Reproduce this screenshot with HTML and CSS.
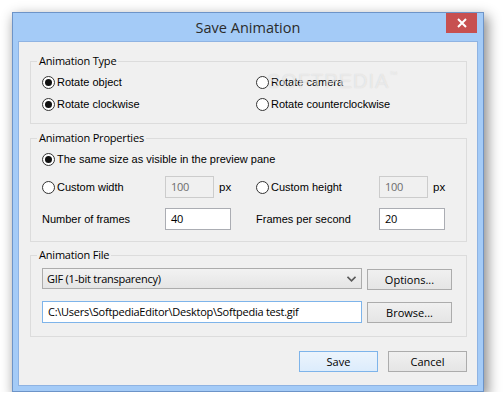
FILE: index.html
```html
<!DOCTYPE html>
<html>
<head>
<meta charset="utf-8">
<link rel="stylesheet" href="styles.css">
</head>
<body>
<div class="window">
  <div class="titlebar">
    <div></div>
    <div class="title">Save Animation</div>
    <div class="close">
      <svg width="10" height="10" viewBox="0 0 10 10"><path d="M1 1 L9 9 M9 1 L1 9" stroke="#fff" stroke-width="2" fill="none"/></svg>
    </div>
  </div>
  <div class="client">
    <div class="watermark">SOFTPEDIA<span class="tm">™</span></div>
    <div class="group g1">
      <div class="legend">Animation Type</div>
      <div class="two">
        <label class="radio"><span class="dot on"></span>Rotate object</label>
        <label class="radio"><span class="dot"></span>Rotate camera</label>
        <label class="radio"><span class="dot on"></span>Rotate clockwise</label>
        <label class="radio"><span class="dot"></span>Rotate counterclockwise</label>
      </div>
    </div>
    <div class="group g2">
      <div class="legend">Animation Properties</div>
      <label class="radio first"><span class="dot on"></span>The same size as visible in the preview pane</label>
      <div class="two rowsize">
        <div class="half">
          <label class="radio"><span class="dot"></span>Custom width</label>
          <div class="input dis short">100</div>
          <span class="px">px</span>
        </div>
        <div class="half">
          <label class="radio"><span class="dot"></span>Custom height</label>
          <div class="input dis short">100</div>
          <span class="px">px</span>
        </div>
      </div>
      <div class="two rowframes">
        <div class="half">
          <span class="lbl">Number of frames</span>
          <div class="input long">40</div>
        </div>
        <div class="half">
          <span class="lbl">Frames per second</span>
          <div class="input long">20</div>
        </div>
      </div>
    </div>
    <div class="group g3">
      <div class="legend">Animation File</div>
      <div class="filerow">
        <div class="select">GIF (1-bit transparency)
          <svg class="chev" width="9" height="6" viewBox="0 0 9 6"><path d="M0.5 0.8 L4.5 4.8 L8.5 0.8" stroke="#5a5a5a" stroke-width="1.6" fill="none"/></svg>
        </div>
        <div class="btn">Options...</div>
      </div>
      <div class="filerow second">
        <div class="input path">C:\Users\SoftpediaEditor\Desktop\Softpedia test.gif</div>
        <div class="btn">Browse...</div>
      </div>
    </div>
    <div class="actions">
      <div class="btn big def">Save</div>
      <div class="btn big">Cancel</div>
    </div>
  </div>
</div>
</body>
</html>
```

FILE: styles.css
```css
html, body {
  margin: 0;
  padding: 0;
  background: #ffffff;
}
body {
  padding: 12px 0 0 12px;
  font-family: "Liberation Sans", Arial, sans-serif;
  font-size: 11px;
  color: #000;
}
.window {
  width: 460px;
  height: 373px;
  border: 1px solid #6d94c8;
  background: #a4cbf7;
  padding: 0 5px 5px 5px;
  box-shadow: 3px 5px 12px 1px rgba(0,0,0,0.45);
  display: flex;
  flex-direction: column;
}
.titlebar {
  height: 28px;
  flex: none;
  display: grid;
  grid-template-columns: 1fr auto 1fr;
  align-items: start;
  margin: 0 -5px;
}
.title {
  font-family: "Open Sans", "Noto Sans", sans-serif;
  font-size: 14.5px;
  color: #2b2b2b;
  line-height: 20px;
  padding-top: 5px;
}
.close {
  justify-self: end;
  margin-right: 6px;
  width: 31px;
  height: 20px;
  background: #c75050;
  display: flex;
  align-items: center;
  justify-content: center;
}
.client {
  flex: 1;
  border: 1px solid #8fb3e2;
  background: #f0f0f0;
  padding: 19px 10px 0 11px;
  position: relative;
  display: flex;
  flex-direction: column;
}
.watermark {
  position: absolute;
  left: 248px;
  top: 28px;
  font-family: "Liberation Sans", sans-serif;
  font-size: 20px;
  letter-spacing: 1px;
  color: rgba(255,255,255,0.5);
  text-shadow: 0 0 1px rgba(160,160,160,0.4);
  pointer-events: none;
}
.watermark .tm {
  font-size: 8px;
  vertical-align: top;
}
.ui {
  font-family: "Open Sans", "Noto Sans", sans-serif;
}
.group {
  border: 1px solid #dcdcdc;
  padding: 0 0 0 11px;
  flex: none;
}
.legend {
  font-family: "Open Sans", "Noto Sans", sans-serif;
  font-size: 11px;
  letter-spacing: -0.2px;
  line-height: 16px;
  height: 16px;
  margin-top: -9px;
  margin-left: -5px;
  padding: 0 2px;
  width: fit-content;
  background: #f0f0f0;
}
.g1 {
  height: 61px;
}
.g1 .two {
  margin-top: 3px;
  row-gap: 2px;
}
.two {
  display: grid;
  grid-template-columns: 214px 1fr;
}
.radio {
  display: flex;
  align-items: center;
  height: 20px;
  white-space: nowrap;
}
.dot {
  width: 11px;
  height: 11px;
  border: 1px solid #333;
  border-radius: 50%;
  background: #fff;
  margin-right: 2px;
  position: relative;
  flex: none;
}
.dot.on::after {
  content: "";
  position: absolute;
  left: 2px;
  top: 2px;
  width: 7px;
  height: 7px;
  border-radius: 50%;
  background: #111;
}
.g2 {
  margin-top: 14px;
  height: 102px;
}
.g2 .first {
  margin-top: 3px;
}
.half {
  display: grid;
  grid-template-columns: 123px auto auto;
  justify-content: start;
  align-items: center;
}
.rowsize {
  margin-top: 7px;
}
.rowframes {
  margin-top: 10px;
}
.input {
  box-sizing: border-box;
  height: 22px;
  border: 1px solid #abadb3;
  background: #fff;
  padding: 0 5px;
  line-height: 19px;
  font-family: "Open Sans", "Noto Sans", sans-serif;
  font-size: 11px;
  letter-spacing: -0.25px;
  white-space: nowrap;
}
.input.dis {
  background: #f0f0f0;
  border-color: #cccccc;
  color: #6d6d6d;
}
.short { width: 49px; }
.long { width: 66px; }
.px {
  margin-left: 5px;
  font-size: 11.5px;
}
.g3 {
  margin-top: 13px;
  height: 80px;
  padding-right: 12px;
}
.filerow {
  display: flex;
  gap: 5px;
  margin-top: 5px;
  align-items: start;
}
.filerow.second {
  margin-top: 11px;
}
.select {
  box-sizing: border-box;
  width: 320px;
  height: 21px;
  border: 1px solid #acacac;
  background: linear-gradient(#f2f2f2, #e5e5e5);
  padding: 0 4px;
  line-height: 19px;
  font-family: "Open Sans", "Noto Sans", sans-serif;
  font-size: 11px;
  letter-spacing: -0.25px;
  display: flex;
  justify-content: space-between;
  align-items: center;
}
.chev {
  margin-right: 1px;
}
.input.path {
  width: 320px;
  border-color: #7eb4ea;
  padding-left: 5px;
}
.btn {
  box-sizing: border-box;
  width: 85px;
  height: 21px;
  border: 1px solid #acacac;
  background: linear-gradient(#f0f0f0, #e5e5e5);
  font-family: "Open Sans", "Noto Sans", sans-serif;
  font-size: 11px;
  display: flex;
  align-items: center;
  justify-content: center;
  margin-top: 1px;
}
.actions {
  display: flex;
  justify-content: flex-end;
  gap: 10px;
  margin-top: 14px;
}
.btn.big {
  width: 79px;
  margin-top: 0;
}
.btn.def {
  border-color: #7eb4ea;
  background: linear-gradient(#ecf4fc, #dcecfc);
}
```
